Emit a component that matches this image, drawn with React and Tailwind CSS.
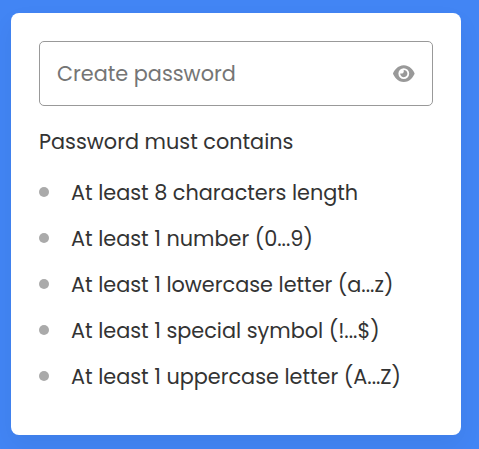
import { FaEye } from "react-icons/fa6";

const requirements = [
  "At least 8 characters length",
  "At least 1 number (0...9)",
  "At least 1 lowercase letter (a...z)",
  "At least 1 special symbol (!...$)",
  "At least 1 uppercase letter (A...Z)",
];

export default function App() {
  return (
    <div className="h-[449px] w-[479px] overflow-hidden bg-[#4285f4] pt-[13px] pl-[11px] font-[Poppins,Inter,sans-serif] text-[20.8px] leading-[30px] text-[#333]">
      <main className="h-[422px] w-[450px] rounded-lg bg-white px-7 pt-7 shadow-[0_10px_25px_rgba(0,0,0,0.05)]">
        <div className="flex h-[65px] w-[394px] items-center rounded-[5px] border border-[#999] px-[17px]">
          <input
            type="password"
            placeholder="Create password"
            className="min-w-0 flex-1 outline-none placeholder:text-[#757575]"
          />
          <FaEye className="h-[19.2px] w-[21.6px] shrink-0 text-[#999]" />
        </div>
        <p className="mt-[21px] whitespace-nowrap">Password must contains</p>
        <ul className="mt-[21px] flex flex-col gap-4">
          {requirements.map((text) => (
            <li key={text} className="flex h-[30px] items-center whitespace-nowrap">
              <span className="mr-[22px] mb-0.5 size-[10px] shrink-0 rounded-full bg-[#aaa]" />
              <span>{text}</span>
            </li>
          ))}
        </ul>
      </main>
    </div>
  );
}
